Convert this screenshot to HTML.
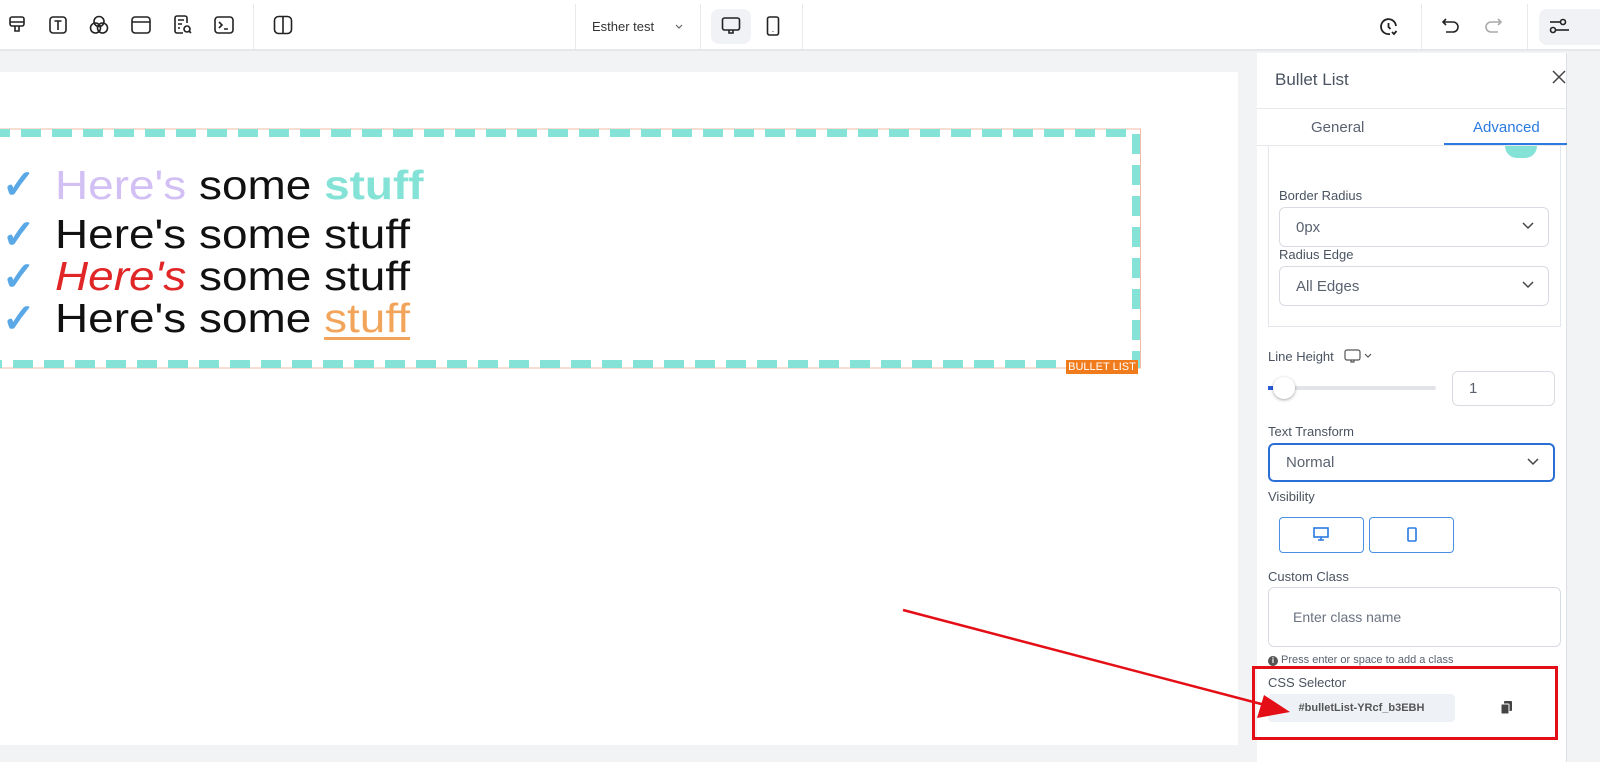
<!DOCTYPE html>
<html><head><style>
*{box-sizing:border-box;margin:0;padding:0}
body{width:1600px;height:762px;overflow:hidden;background:#f2f3f5;font-family:"Liberation Sans",sans-serif;position:relative}
.top{position:absolute;left:0;top:0;width:1600px;height:51px;background:#fff;border-bottom:2px solid #e6e7ea}
.ic{position:absolute;top:15px}
.vs{position:absolute;top:4px;width:1px;height:46px;background:#e8e9ec}
.canvas{position:absolute;left:0;top:72px;width:1238px;height:673px;background:#fff}
.panel{position:absolute;left:1257px;top:53px;width:310px;height:709px;background:#fff;border-right:1px solid #dcdfe4}
.lbl{position:absolute;left:11px;font-size:13px;color:#4a5360}
.sel{position:absolute;border:1px solid #d8dce2;border-radius:6px;font-size:15px;color:#5a6270;padding-left:16px;display:flex;align-items:center}
.chev{position:absolute;right:14px;top:50%;margin-top:-5px}
.line{position:absolute;left:55px;font-size:41px;color:#111;white-space:nowrap;transform:scaleX(1.12);transform-origin:0 0}
.ck{position:absolute;left:2px;font-size:40px;color:#5aa8e6;font-weight:bold}
</style></head><body>
<div class="top">
 <svg class="ic" style="left:8px" width="18" height="20" viewBox="0 0 18 20" fill="none" stroke="#222" stroke-width="1.6"><rect x="2" y="2" width="14" height="9" rx="2"/><path d="M2 7h14M7 11v5h4v-5"/></svg>
 <svg class="ic" style="left:49px" width="18" height="20" viewBox="0 0 18 20" fill="none" stroke="#222" stroke-width="1.6"><rect x="1" y="2" width="16" height="16" rx="3"/><path d="M5.5 6h7M9 6v9"/></svg>
 <svg class="ic" style="left:89px" width="20" height="20" viewBox="0 0 20 20" fill="none" stroke="#222" stroke-width="1.6"><circle cx="10" cy="6.5" r="5"/><circle cx="6.5" cy="13" r="5"/><circle cx="13.5" cy="13" r="5"/></svg>
 <svg class="ic" style="left:131px" width="20" height="20" viewBox="0 0 20 20" fill="none" stroke="#222" stroke-width="1.6"><rect x="1" y="2" width="18" height="16" rx="3"/><path d="M1 7h18"/></svg>
 <svg class="ic" style="left:173px" width="20" height="20" viewBox="0 0 20 20" fill="none" stroke="#222" stroke-width="1.6"><path d="M10 18H4a2 2 0 0 1-2-2V3a2 2 0 0 1 2-2h8a2 2 0 0 1 2 2v5M5 5h6M5 9h4M5 13h2"/><circle cx="14" cy="14" r="3"/><path d="M16 16l2 2"/></svg>
 <svg class="ic" style="left:214px" width="20" height="20" viewBox="0 0 20 20" fill="none" stroke="#222" stroke-width="1.6"><rect x="1" y="2" width="18" height="16" rx="3"/><path d="M5 7l3 3-3 3M10 14h4"/></svg>
 <div class="vs" style="left:253px"></div>
 <svg class="ic" style="left:273px" width="20" height="20" viewBox="0 0 20 20" fill="none" stroke="#222" stroke-width="1.6"><rect x="1.5" y="1.5" width="17" height="17" rx="4"/><path d="M10 2v16"/></svg>
 <div class="vs" style="left:575px"></div>
 <div style="position:absolute;left:592px;top:19px;font-size:13px;color:#333">Esther test</div>
 <svg style="position:absolute;left:675px;top:24px" width="8" height="6" viewBox="0 0 8 6" fill="none" stroke="#666" stroke-width="1.2"><path d="M1 1l3 3 3-3"/></svg>
 <div class="vs" style="left:700px"></div>
 <div style="position:absolute;left:711px;top:9px;width:40px;height:35px;background:#f0f2f5;border-radius:8px"></div>
 <svg class="ic" style="left:721px;top:16px" width="20" height="20" viewBox="0 0 20 20" fill="none" stroke="#222" stroke-width="1.6"><rect x="1.5" y="2" width="17" height="12" rx="2"/><path d="M8 14v3h4v-3"/></svg>
 <svg class="ic" style="left:766px;top:16px" width="14" height="20" viewBox="0 0 14 20" fill="none" stroke="#222" stroke-width="1.6"><rect x="1.5" y="1" width="11" height="18" rx="2"/><path d="M7 15.5v.5"/></svg>
 <div class="vs" style="left:802px"></div>
 <svg class="ic" style="left:1379px;top:17px" width="20" height="20" viewBox="0 0 20 20" fill="none" stroke="#222" stroke-width="1.8"><path d="M17 9A7.5 7.5 0 1 0 11 17"/><path d="M9.5 6v4l2 2M13 15l2 2 2.5-3"/></svg>
 <div class="vs" style="left:1421px"></div>
 <svg class="ic" style="left:1441px;top:17px" width="20" height="18" viewBox="0 0 20 18" fill="none" stroke="#222" stroke-width="1.6"><path d="M5 2L2 5l3 3M2 5h10a5 5 0 0 1 0 10H5"/></svg>
 <svg class="ic" style="left:1483px;top:17px" width="20" height="18" viewBox="0 0 20 18" fill="none" stroke="#aaa" stroke-width="1.6"><path d="M15 2l3 3-3 3M18 5H8a5 5 0 0 0 0 10h7"/></svg>
 <div class="vs" style="left:1527px"></div>
 <div style="position:absolute;left:1539px;top:9px;width:70px;height:36px;background:#f0f2f5;border-radius:8px"></div>
 <svg class="ic" style="left:1549px;top:18px" width="20" height="16" viewBox="0 0 20 16" fill="none" stroke="#222" stroke-width="1.6"><circle cx="14" cy="4" r="2.5"/><path d="M1 4h10.5"/><circle cx="4" cy="12" r="2.5"/><path d="M6.5 12H20"/></svg>
</div>

<div class="canvas"></div>
<svg style="position:absolute;left:0;top:125px" width="1145" height="250">
 <rect x="-10" y="4" width="1150.5" height="239" fill="none" stroke="#f3b9a6" stroke-width="1"/>
 <rect x="-10" y="8" width="1146" height="231" fill="none" stroke="#84e3d6" stroke-width="8" stroke-dasharray="20 11"/>
</svg>
<div style="position:absolute;left:1066px;top:360px;width:72px;height:14px;background:#f07b1c;color:#fff;font-size:11px;line-height:14px;text-align:center">BULLET LIST</div>

<div class="ck" style="top:162px">✓</div>
<div class="ck" style="top:212px">✓</div>
<div class="ck" style="top:254px">✓</div>
<div class="ck" style="top:296px">✓</div>
<div class="line" style="top:162px"><span style="color:#d2bff3">Here's</span> some <b style="color:#84e3d6">stuff</b></div>
<div class="line" style="top:211px">Here's some stuff</div>
<div class="line" style="top:253px"><i style="color:#e02626">Here's</i> some stuff</div>
<div class="line" style="top:295px">Here's some <span style="color:#f2a55a;text-decoration:underline;text-decoration-thickness:3px;text-underline-offset:5px">stuff</span></div>

<div class="panel">
 <div style="position:absolute;left:18px;top:17px;font-size:17px;color:#4a5360">Bullet List</div>
 <svg style="position:absolute;left:295px;top:17px" width="14" height="14" viewBox="0 0 14 14" stroke="#444" stroke-width="1.5"><path d="M1 1l12 12M13 1L1 13"/></svg>
 <div style="position:absolute;left:0;top:55px;width:310px;height:1px;background:#e6e8eb"></div>
 <div style="position:absolute;left:54px;top:66px;font-size:15px;color:#5a6270">General</div>
 <div style="position:absolute;left:216px;top:66px;font-size:15px;color:#2a7ae2">Advanced</div>
 <div style="position:absolute;left:187px;top:90px;width:123px;height:2px;background:#2a7ae2"></div>
 <div style="position:absolute;left:0;top:92px;width:310px;height:1px;background:#e6e8eb"></div>
 <div style="position:absolute;left:11px;top:93px;width:293px;height:181px;border:1px solid #e3e6ea;border-top:none"></div>
 <div style="position:absolute;left:248px;top:93px;width:32px;height:12px;background:#84e3d6;border-radius:0 0 16px 16px"></div>
 <div class="lbl" style="left:22px;top:135px">Border Radius</div>
 <div class="sel" style="left:22px;top:154px;width:270px;height:40px">0px<svg class="chev" width="12" height="8" viewBox="0 0 12 8" fill="none" stroke="#444" stroke-width="1.5"><path d="M1 1l5 5 5-5"/></svg></div>
 <div class="lbl" style="left:22px;top:194px">Radius Edge</div>
 <div class="sel" style="left:22px;top:213px;width:270px;height:40px">All Edges<svg class="chev" width="12" height="8" viewBox="0 0 12 8" fill="none" stroke="#444" stroke-width="1.5"><path d="M1 1l5 5 5-5"/></svg></div>
 <div class="lbl" style="top:296px">Line Height</div>
 <svg style="position:absolute;left:87px;top:296px" width="30" height="14" viewBox="0 0 30 14" fill="none" stroke="#555" stroke-width="1.2"><rect x="1" y="1" width="15" height="10" rx="2"/><path d="M7 11v2h3v-2M21 5l3 3 3-3"/></svg>
 <div style="position:absolute;left:11px;top:333px;width:168px;height:4px;background:#e2e4e8;border-radius:2px"></div>
 <div style="position:absolute;left:11px;top:333px;width:8px;height:4px;background:#2a5ed8"></div>
 <div style="position:absolute;left:16px;top:324px;width:22px;height:22px;border-radius:50%;background:#fff;box-shadow:0 1px 3px rgba(0,0,0,.35)"></div>
 <div class="sel" style="left:195px;top:318px;width:103px;height:35px">1</div>
 <div class="lbl" style="top:371px">Text Transform</div>
 <div class="sel" style="left:11px;top:390px;width:287px;height:39px;border:2px solid #2a6fd6">Normal<svg class="chev" width="12" height="8" viewBox="0 0 12 8" fill="none" stroke="#444" stroke-width="1.5"><path d="M1 1l5 5 5-5"/></svg></div>
 <div class="lbl" style="top:436px">Visibility</div>
 <div style="position:absolute;left:22px;top:464px;width:85px;height:36px;border:1px solid #4a90e2;border-radius:4px"></div>
 <svg style="position:absolute;left:56px;top:474px" width="16" height="14" viewBox="0 0 16 14" fill="none" stroke="#2a7ae2" stroke-width="1.6"><rect x="1" y="1" width="14" height="9"/><path d="M5 13h6M8 10v3"/></svg>
 <div style="position:absolute;left:112px;top:464px;width:85px;height:36px;border:1px solid #4a90e2;border-radius:4px"></div>
 <svg style="position:absolute;left:150px;top:474px" width="10" height="15" viewBox="0 0 10 15" fill="none" stroke="#2a7ae2" stroke-width="1.6"><rect x="1" y="1" width="8" height="13" rx="1"/></svg>
 <div class="lbl" style="top:516px">Custom Class</div>
 <div class="sel" style="left:11px;top:534px;width:293px;height:60px;padding-left:24px;font-size:14px;color:#6a7280">Enter class name</div>
 <div style="position:absolute;left:11px;top:601px;font-size:11px;color:#5a6270"><span style="display:inline-block;width:10px;height:10px;border-radius:50%;background:#555;color:#fff;font-size:8px;text-align:center;line-height:10px;font-weight:bold">i</span> Press enter or space to add a class</div>
 <div class="lbl" style="top:622px">CSS Selector</div>
 <div style="position:absolute;left:11px;top:641px;width:187px;height:28px;background:#eef2f6;border-radius:4px;font-size:11px;font-weight:bold;color:#555;text-align:center;line-height:28px">#bulletList-YRcf_b3EBH</div>
 <svg style="position:absolute;left:244px;top:648px" width="12" height="13" viewBox="0 0 12 13" fill="#444"><rect x="3" y="0" width="8" height="10" rx="1"/><rect x="0" y="3" width="8" height="10" rx="1" stroke="#fff" stroke-width="1"/></svg>
</div>
<div style="position:absolute;left:1252px;top:666px;width:306px;height:74px;border:3px solid #e40f16"></div>
<svg style="position:absolute;left:0;top:0" width="1600" height="762"><line x1="903" y1="610" x2="1265" y2="705" stroke="#e40f16" stroke-width="2.5"/><polygon points="1290,712 1257,718 1264,695" fill="#e40f16"/></svg>
</body></html>
